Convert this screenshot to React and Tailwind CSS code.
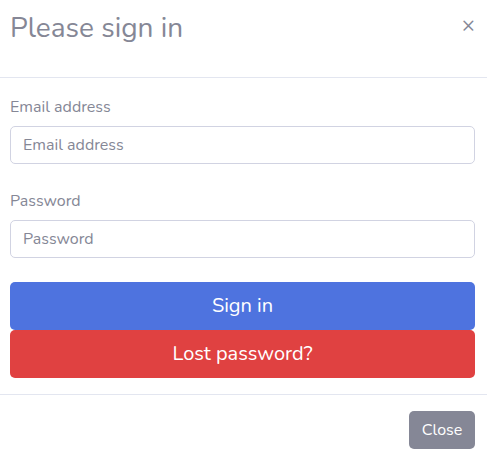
import React from 'react';

const App = () => {
  return (
    <div className="w-[487px] h-[460px] bg-white text-[#858796] font-['Nunito','Lato','Noto_Sans',sans-serif] overflow-hidden">
      <div className="h-[78px] px-[10px] pt-[12px] border-b border-[#e3e6f0] flex justify-between items-start">
        <h5 className="text-[28px] leading-[1.2] font-normal text-[#858796]">Please sign in</h5>
        <button className="mr-[2px] mt-[2px] text-[22px] leading-none text-[#858796]">&times;</button>
      </div>
      <div className="pl-[10px] pr-[12px] pt-[17px]">
        <label className="block text-[16px] leading-[24px] mb-[7px]">Email address</label>
        <input
          type="email"
          placeholder="Email address"
          className="block w-full h-[38px] px-[12px] border border-[#d1d3e2] rounded-[5px] text-[16px] placeholder:text-[#858796] outline-none"
        />
        <label className="block text-[16px] leading-[24px] mt-[25px] mb-[7px]">Password</label>
        <input
          type="password"
          placeholder="Password"
          className="block w-full h-[38px] px-[12px] border border-[#d1d3e2] rounded-[5px] text-[16px] placeholder:text-[#858796] outline-none"
        />
        <button className="block w-full mt-[24px] h-[48px] rounded-[5px] bg-[#4e73df] text-white text-[20px]">Sign in</button>
        <button className="block w-full h-[48px] rounded-[5px] bg-[#e04141] text-white text-[20px]">Lost password?</button>
      </div>
      <div className="mt-[16px] border-t border-[#e3e6f0] pr-[12px] pt-[16px] flex justify-end">
        <button className="h-[38px] w-[66px] rounded-[5px] bg-[#858796] text-white text-[16px]">Close</button>
      </div>
    </div>
  );
};

export default App;
